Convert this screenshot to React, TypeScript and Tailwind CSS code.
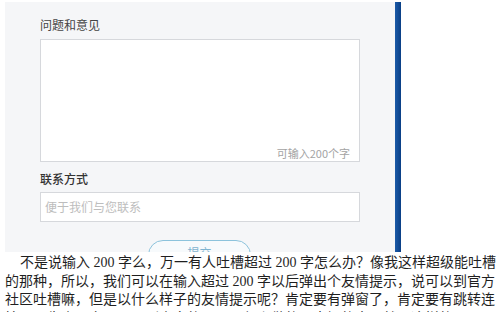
export default function App() {
  const lines = [
    "不是说输入 200 字么，万一有人吐槽超过 200 字怎么办？像我这样超级能吐槽",
    "的那种，所以，我们可以在输入超过 200 字以后弹出个友情提示，说可以到官方",
    "社区吐槽嘛，但是以什么样子的友情提示呢？肯定要有弹窗了，肯定要有跳转连",
    "接呀，先去研究了一下别人家的页面是怎么做的，大概的意思就是这样的吧，嗯",
  ]

  return (
    <div className="w-[500px] h-[312px] overflow-hidden bg-white font-['Noto_Sans_CJK_SC',sans-serif]">
      {/* screenshot of the feedback form */}
      <div className="flex h-[252px] pt-[2px] pl-[5px]">
        <div className="w-[390px] h-full overflow-hidden bg-[#f5f6f8] pl-[35px] pt-[15px]">
          <div className="text-[12px] leading-[16px] text-[#444]">问题和意见</div>
          <div className="mt-[6px] w-[320px] h-[123px] bg-white border border-[#d6d8dc] flex flex-col justify-end items-end pr-[9px] pb-[1px]">
            <span className="text-[11px] leading-[14px] text-[#a3a3a3]">可输入200个字</span>
          </div>
          <div className="mt-[9px] text-[12px] leading-[16px] font-medium text-[#333]">联系方式</div>
          <div className="mt-[5px] w-[320px] h-[30px] bg-white border border-[#d6d8dc] flex items-center pl-[4px]">
            <span className="text-[12px] text-[#bdbdbd]">便于我们与您联系</span>
          </div>
          <div className="mt-[18px] ml-[108px] w-[103px] h-[30px] rounded-[15px] border border-[#8cc3dc] bg-[#f7fafc] flex justify-center pt-[4px]">
            <span className="text-[12px] leading-[16px] text-[#7fb4d0]">提交</span>
          </div>
        </div>
        <div className="w-[6px] h-full bg-gradient-to-r from-[#1b5aa8] to-[#0a3f86]"></div>
        <div className="flex-1 bg-white"></div>
      </div>

      {/* article text */}
      <div className="px-[5px] pt-[2px] text-[14px] leading-[18.5px] text-[#1f1f1f] font-['Liberation_Serif','Noto_Sans_CJK_SC',serif]">
        {lines.map((line, i) => (
          <div
            key={i}
            className={
              "text-justify [text-align-last:justify] whitespace-nowrap " +
              (i === 0 ? "pl-[15px]" : "")
            }
          >
            {line}
          </div>
        ))}
      </div>
    </div>
  )
}
